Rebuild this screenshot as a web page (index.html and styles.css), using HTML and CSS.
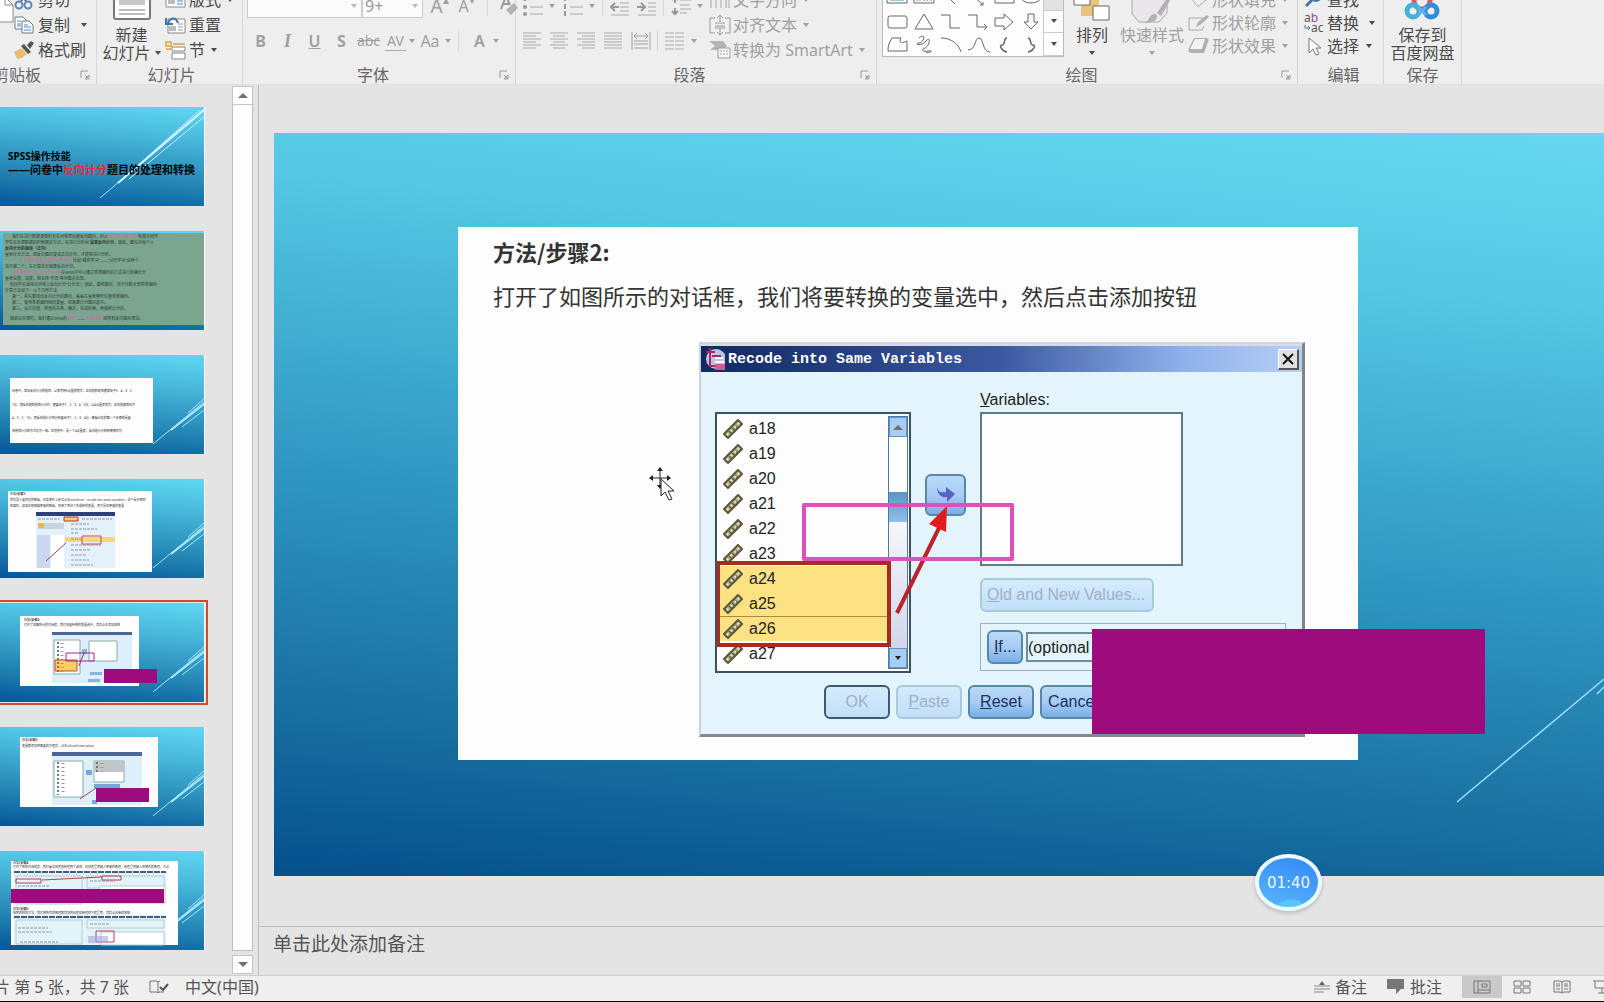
FILE: index.html
```
<!DOCTYPE html>
<html lang="zh-CN">
<head>
<meta charset="utf-8">
<title>SPSS操作技能</title>
<link rel="stylesheet" href="styles.css">
</head>
<body>
<svg class="defs" aria-hidden="true">
  <symbol id="launch" viewBox="0 0 10 10"><path d="M1 8V1h7M5 5l3 3M9 5v4H5z" fill="none" stroke="currentColor"/></symbol>
  <symbol id="streaks" viewBox="0 0 204 99"><g stroke="#a5e6fa" fill="none"><path d="M153 89L204 47"/><path d="M171 75L204 49" stroke-width="2"/><path d="M182 72L204 55M188 58L204 44"/></g></symbol>
  <symbol id="ruler" viewBox="0 0 20 20"><path d="M1 15L15 1l4 4L5 19z" fill="#b9b48c" stroke="#5c583d" stroke-width="2"/><path d="M6 12l3 3M9 9l3 3M12 6l3 3" stroke="#5c583d" stroke-width="1.5"/><path d="M4 15l1 1M8 11l1 1M12 7l1 1M15 4l1 1" stroke="#f2efd2" stroke-width="2"/></symbol>
</svg>

<header class="ribbon">
  <section class="group clip">
    <div class="main">
      <button class="big paste"><svg width="60" height="30"><path d="M34 3h17l8 8v17H34z" fill="#fff" stroke="#888"/><path d="M51 3v8h8" fill="none" stroke="#888"/></svg><span>粘贴</span><span>&nbsp;</span></button>
      <div class="col">
        <button class="cmd"><svg width="20" height="20"><path d="M7 11L15 1M12 11L5 1" stroke="#555" stroke-width="2"/><circle cx="5" cy="15" r="3.5" fill="none" stroke="#5b88bd" stroke-width="2"/><circle cx="14" cy="15" r="3.5" fill="none" stroke="#5b88bd" stroke-width="2"/></svg>剪切</button>
        <button class="cmd"><svg width="20" height="20"><path d="M1 2h8l3 3v9H1z" fill="#fff" stroke="#6d7b8a"/><path d="M3 6h4M3 9h4M3 11h4" stroke="#5b88bd"/><path d="M8 6h7l4 4v8H8z" fill="#fff" stroke="#6d7b8a"/><path d="M10 10h4M10 12h7M10 15h7" stroke="#5b88bd"/></svg>复制<i class="caret far"></i></button>
        <button class="cmd"><svg width="20" height="20"><path d="M0 12l8-4 5 6-5 4-5 1z" fill="#e8bd72"/><path d="M7 6l3-2 7 8-3 2zM13 5l4-4 3 2-4 6z" fill="#555"/></svg>格式刷</button>
      </div>
    </div>
    <footer class="label"><span>剪贴板</span><button class="launch" aria-label="剪贴板选项"><svg width="10" height="10"><use href="#launch"/></svg></button></footer>
  </section>

  <section class="group slides">
    <div class="main">
      <button class="big new"><svg width="40" height="42"><rect x="2" y="4" width="36" height="37" rx="2" fill="#fff" stroke="#777" stroke-width="2"/><path d="M7 10h26v17H7z" fill="#c9c9cd"/><path d="M7 32h26M7 36h26" stroke="#777"/></svg><span>新建</span><span>幻灯片<i class="caret"></i></span></button>
      <div class="col">
        <button class="cmd"><svg width="22" height="20"><path d="M1 1h19v16H1z" fill="#fff" stroke="#888"/><path d="M3 5h7v9H3z" fill="#bbb"/><path d="M12 8h6M12 11h6M12 14h6" stroke="#4e81b5"/></svg>版式<i class="caret"></i></button>
        <button class="cmd"><svg width="22" height="20"><path d="M3 4h17v14H3z" fill="#fff" stroke="#888"/><path d="M4 11h7v5H4z" fill="#bbb"/><path d="M13 9h5M13 12h5M13 15h5" stroke="#999"/><path d="M3 8c3-6 8-6 10 0M1 3v6h7" fill="none" stroke="#3e74ae" stroke-width="2"/></svg>重置</button>
        <button class="cmd"><svg width="22" height="20"><path d="M1 2h5v4H1z" fill="none" stroke="#e5b45f" stroke-width="2"/><path d="M8 4h12M1 9h5" stroke="#e5b45f" stroke-width="2"/><path d="M7 7h13v4H7zM7 13h13v6H7z" fill="#fff" stroke="#888"/></svg>节<i class="caret"></i></button>
      </div>
    </div>
    <footer class="label"><span>幻灯片</span></footer>
  </section>

  <section class="group font off">
    <div class="main stack">
      <div class="line">
        <label class="combo name"><input aria-label="字体名称" value=""><i class="caret"></i></label>
        <label class="combo size"><input aria-label="字号" value="9+"><i class="caret"></i></label>
        <button class="tool a1">A<sup>▴</sup></button><button class="tool a2">A<sup>▾</sup></button><i class="sep"></i>
        <button class="tool" aria-label="清除格式"><svg width="20" height="22"><path d="M2 14L7 1l4 9M4 9h6" fill="none" stroke="#999" stroke-width="2"/><path d="M7 15l8-7 4 5-7 7z" fill="#b4b0b4"/></svg></button>
      </div>
      <div class="line low">
        <button class="tool"><b>B</b></button><button class="tool serif"><b><em>I</em></b></button><button class="tool semi"><u>U</u></button><button class="tool"><b>S</b></button><button class="tool small"><s>abc</s></button><button class="tool av">AV</button><i class="caret"></i><button class="tool aa">Aa</button><i class="caret"></i><i class="sep"></i><button class="tool semi">A</button><i class="caret"></i>
      </div>
    </div>
    <footer class="label"><span>字体</span><button class="launch" aria-label="字体选项"><svg width="10" height="10"><use href="#launch"/></svg></button></footer>
  </section>

  <section class="group para off">
    <div class="main">
      <div class="stack">
        <div class="line">
          <button class="tool" aria-label="项目符号"><svg width="20" height="20"><path d="M7 3h13M7 11h13M7 18h13" stroke="#aaa"/><circle cx="2" cy="3" r="2" fill="#999"/><circle cx="2" cy="11" r="2" fill="#999"/><circle cx="2" cy="18" r="2" fill="#999"/></svg></button><i class="caret"></i>
          <button class="tool" aria-label="编号"><svg width="20" height="20"><path d="M7 3h13M7 11h13M7 18h13" stroke="#aaa"/><path d="M2 0v5M2 8v5M2 15v5" stroke="#999" stroke-width="2"/></svg></button><i class="caret"></i><i class="sep wide"></i>
          <button class="tool" aria-label="减少缩进"><svg width="22" height="20"><path d="M2 3h18M11 7h9M11 11h9M11 15h9M2 19h18" stroke="#aaa"/><path d="M10 11H2M6 7l-4 4 4 4" fill="none" stroke="#999" stroke-width="2"/></svg></button>
          <button class="tool" aria-label="增加缩进"><svg width="22" height="20"><path d="M2 3h18M12 7h8M12 11h8M12 15h8M2 19h18" stroke="#aaa"/><path d="M1 11h8M5 7l4 4-4 4" fill="none" stroke="#999" stroke-width="2"/></svg></button><i class="sep wide"></i>
          <button class="tool" aria-label="行距"><svg width="20" height="20"><path d="M9 4h11M9 9h10M9 13h11M9 17h7" stroke="#aaa"/><path d="M4 0v7M4 12v7M1 4l3-3 3 3M1 15l3 3 3-3" fill="none" stroke="#999" stroke-width="2"/></svg></button><i class="caret"></i>
        </div>
        <div class="line low">
          <button class="tool" aria-label="左对齐"><svg width="19" height="18"><path d="M0 1h18M0 4h13M0 7h18M0 10h13M0 13h18M0 16h13" stroke="#aaa"/></svg></button>
          <button class="tool" aria-label="居中"><svg width="19" height="18"><path d="M0 1h18M3 4h12M0 7h18M3 10h12M0 13h18M3 16h12" stroke="#aaa"/></svg></button>
          <button class="tool" aria-label="右对齐"><svg width="19" height="18"><path d="M0 1h18M5 4h13M0 7h18M5 10h13M0 13h18M5 16h13" stroke="#aaa"/></svg></button>
          <button class="tool" aria-label="两端对齐"><svg width="19" height="18"><path d="M0 1h18M0 4h18M0 7h18M0 10h18M0 13h18M0 16h18" stroke="#aaa"/></svg></button>
          <button class="tool" aria-label="分散对齐"><svg width="20" height="18"><path d="M1 0v18M19 0v18M3 9h14M3 12h14M3 16h14M3 4h14M6 1L3 4l3 3M14 1l3 3-3 3" fill="none" stroke="#a2a2a2"/></svg></button><i class="sep wide"></i>
          <button class="tool" aria-label="分栏"><svg width="19" height="18"><path d="M0 1h9M0 5h9M0 9h9M0 13h9M0 17h9M10 1h9M10 5h9M10 9h9M10 13h9M10 17h9" stroke="#aaa"/></svg></button><i class="caret"></i>
        </div>
      </div>
      <div class="col">
        <button class="cmd"><svg width="22" height="20"><path d="M2 1v17M7 1v17M12 5v13M17 1v17M20 5v13" stroke="#aaa"/></svg>文字方向<i class="caret"></i></button>
        <button class="cmd"><svg width="22" height="20"><path d="M6 3H1v15h5M16 3h5v15h-5M6 8h10M6 11h10M6 13h10M11 0v7M11 14v6M8 3l3-3 3 3M8 17l3 3 3-3" fill="none" stroke="#999"/></svg>对齐文本<i class="caret"></i></button>
        <button class="cmd"><svg width="22" height="20"><path d="M0 1h14l4 5-4 4H1l5-4z" fill="#b5b5b5"/><path d="M9 8h12v10H9z" fill="#f4f4f4" stroke="#999"/><path d="M11 11h8M11 14h8" stroke="#aaa" stroke-dasharray="2 1"/></svg>转换为 SmartArt<i class="caret"></i></button>
      </div>
    </div>
    <footer class="label"><span>段落</span><button class="launch" aria-label="段落选项"><svg width="10" height="10"><use href="#launch"/></svg></button></footer>
  </section>

  <section class="group draw">
    <div class="main tight">
      <div class="gallery">
        <svg width="160" height="68" fill="none" stroke="#666">
          <path d="M4 2h20v13H4zM31 2h20v13H31z"/><path d="M7 6h8M7 9h14M7 12h14" stroke="#3a9aa5"/><path d="M34 5v8M37 5v8M41 5v8M44 5v8M48 8v5" stroke="#7a6a88"/>
          <path d="M60 4l12 12M86 4l14 13M97 17h3v-3M112 4h19v11h-19z"/><ellipse cx="148" cy="9" rx="10" ry="6"/>
          <rect x="5" y="28" width="19" height="12" rx="2"/><path d="M41 26l9 15H32zM58 27h9v13h10M85 27h9v12h10M101 36l3 3-3 3M112 30h9v-4l9 8-9 8v-4h-9zM145 26h6v8h4l-7 7-7-7h4z"/>
          <path d="M5 63c0-6 1-8 4-13h9c-3 6 2 5 6 3v10zM36 50c7-6 6 4 0 5s2 4 7-2 4 5-1 7-2 4 4 3-1 3-3 1M58 50c11 0 18 7 20 14M85 62c9-1 6-12 11-12s3 14 11 14"/>
          <path d="M124 50c-4 0-1 7-5 7s1 7 5 7M145 50c4 0 1 7 5 7s-1 7-5 7" stroke-width="1.5"/>
        </svg>
        <div class="spin"><button aria-label="上一行"></button><button aria-label="下一行"><i class="caret"></i></button><button aria-label="其他"><i class="caret more"></i></button></div>
      </div>
      <button class="big arr"><svg width="38" height="34"><path d="M8 10h18v18H8z" fill="#ebc27a"/><path d="M1 1h16v16H1zM20 18h16v14H20z" fill="#fff" stroke="#666"/></svg><span>排列</span><span><i class="caret"></i></span></button>
      <button class="big quick off"><svg width="42" height="40"><path d="M1 2h35v27l-8 9H8l-7-8z" fill="#eae7ea" stroke="#aaa"/><path d="M12 39c7 0 5-10 13-9 4 6-5 10-13 9zM26 29l12-18 3 2-11 19z" fill="#b4b0b4"/></svg><span>快速样式</span><span><i class="caret"></i></span></button>
      <div class="col off">
        <button class="cmd"><svg width="22" height="20"><path d="M3 8l8-7 8 8-9 8z" fill="#eee" stroke="#aaa"/></svg>形状填充<i class="caret"></i></button>
        <button class="cmd"><svg width="22" height="20"><path d="M1 5h15M1 5v12h13l2-4" fill="none" stroke="#aaa"/><path d="M8 14l2-5 9-7 2 2-9 8z" fill="#b3aeb3"/></svg>形状轮廓<i class="caret"></i></button>
        <button class="cmd"><svg width="22" height="20"><path d="M6 2h12c3 0 3 2 2 4l-4 11H4c-4 0-4-3-3-5z" fill="#b3aeb3"/><path d="M7 3h10L14 13H2z" fill="#f3f1f3"/></svg>形状效果<i class="caret"></i></button>
      </div>
    </div>
    <footer class="label"><span>绘图</span><button class="launch off" aria-label="绘图选项"><svg width="10" height="10"><use href="#launch"/></svg></button></footer>
  </section>

  <section class="group edit">
    <div class="main tight"><div class="col">
      <button class="cmd"><svg width="20" height="20"><circle cx="12" cy="6" r="5" fill="none" stroke="#4377ad" stroke-width="2"/><path d="M8 10l-6 6" stroke="#4377ad" stroke-width="3"/></svg>查找</button>
      <button class="cmd"><svg width="20" height="20" class="swap"><text x="0" y="9">a<tspan fill="#8b4aa0">b</tspan></text><text x="7" y="19">ac</text><path d="M1 12v3h5M4 13l2 2-2 2" fill="none" stroke="#4377ad"/></svg>替换<i class="caret far"></i></button>
      <button class="cmd"><svg width="20" height="20"><path d="M5 2v15l4-4 3 6 3-1-3-6h5z" fill="#fff" stroke="#777"/></svg>选择<i class="caret"></i></button>
    </div></div>
    <footer class="label"><span>编辑</span></footer>
  </section>

  <section class="group save">
    <div class="main">
      <button class="big"><svg width="36" height="42" fill="none" stroke-width="5"><circle cx="18" cy="23" r="8" stroke="#e65368"/><circle cx="9" cy="33" r="6" stroke="#42b2dd"/><circle cx="27" cy="33" r="6" stroke="#2f8ed8"/><path d="M14 29l8 8M22 29l-8 8" stroke="#58b5e6" stroke-width="3"/></svg><span>保存到</span><span>百度网盘</span></button>
    </div>
    <footer class="label"><span>保存</span></footer>
  </section>
</header>

<div class="work">
  <nav class="thumbs" aria-label="幻灯片缩略图">
    <button class="thumb"><svg viewBox="0 0 204 99"><path d="M100 91L204 2" stroke="#a5e6fa"/><path d="M118 76L204 3" stroke="#d5f5fd" stroke-width="2"/><path d="M136 60L200 3M129 72L204 10" stroke="#c3effb"/><text x="8" y="53" class="t10 bold">SPSS操作技能</text><text x="8" y="67" class="t11 bold">——问卷中<tspan fill="#e8283c">反向计分</tspan>题目的处理和转换</text></svg></button>
    <button class="thumb"><svg viewBox="0 0 204 99"><path d="M3 2h201v92H3z" fill="#7ba58e"/><g class="t4">
      <text x="12" y="7">我们在进行数据调查时会在问卷里设置反向题目，防止 <tspan class="pk">被试不认真作答</tspan> 有很多同学</text>
      <text x="5" y="13">学生在处理数据的时候都会忘记，在进行分析前 <tspan class="bold">需要反向计分</tspan>，因此，要先对每个人</text>
      <text x="5" y="19" class="bold">反向计分的题目（正向）</text><text x="5" y="25">量表计分方法，把反向题目变成正向计分，才能够进行分析。</text>
      <text x="20" y="31"><tspan class="pk">正向题目和反向题目混合使用</tspan> 比如“喜欢学习”——“讨厌学习”这两个</text>
      <text x="5" y="37">其中第二个，在计算总分需要反向计分。</text>
      <text x="12" y="43"><tspan class="pk">如果没有进行反向计分处理</tspan> 在SPSS中可以通过重新编码的方式进行转换计分</text>
      <text x="5" y="49">量表信度，效度，相关性“不高”等问题会出现。</text><text x="10" y="55">有同学会直接在问卷上反向计分“计分法”，因此，要把题目，其中分数全部重新编码</text>
      <text x="5" y="61">计算方法如下：以下几种方法</text><text x="12" y="67">第一，首先要找出反向计分的题目，看看在量表哪些位置重新编码。</text><text x="12" y="73">第二，使用重新编码相同变量，把需要计分题目选中。</text><text x="12" y="79">第三，设定旧值、新值的关系，确定，完成转换，再做统计分析。</text>
      <text x="10" y="89">因此在处理时，我们通过SPSS的 <tspan class="pk">转换</tspan> —— <tspan class="pk">重新编码</tspan> 把所有反向题处理完。</text></g></svg></button>
    <button class="thumb"><svg viewBox="0 0 204 99"><use href="#streaks"/><path d="M10 23h143v65H10z" fill="#fdfdfd"/><g class="t3 mid"><text x="12" y="37">问卷中，常见反向计分的题目，以李克特5点量表而言，正向题的题项通常给予5、4、3、2、</text><text x="12" y="51">1分，而反向题的题项计分时，便要给予1、2、3、4、5分；以4点量表而言，正向题通常给予</text><text x="12" y="64">4、3、2、1分，而反向题计分则分别要给予1、2、3、4分，数据分析的第一个步骤就是要</text><text x="12" y="77">将题项计分的方式化为一致。在范例中，是一个4点量表，反向题计分的转换情形为：</text></g></svg></button>
    <button class="thumb"><svg viewBox="0 0 204 99"><use href="#streaks"/><path d="M8 12h144v81H8z" fill="#fdfdfd"/><g class="t3"><text x="10" y="16" class="bold">方法/步骤1:</text><text x="10" y="22">首先导入要处理的数据，在菜单栏上依次点击transform - recode into same variables，这个是对相同</text><text x="10" y="28">的编码，如果你想保留原来的数据，则用下面这个生成新的变量，而不是在原来的变量</text></g>
      <path d="M36 33h79v56H36z" fill="#e5f1fa"/><path d="M36 33h79v4H36z" fill="#2c3f78"/><path d="M38 44h26v6H38z" fill="#c7d3de"/><path d="M38 44h6v5h-6z" fill="#e5b74f"/><path d="M64 38h14v4H64z" fill="#f2cf6a" stroke="#b6323c"/><path d="M65 58h50v5H65z" fill="#f5d873"/><path d="M37 56h13v33H37z" fill="#cbd9f0"/><path d="M51 56h13v33H51z" fill="#fff"/><path d="M38 40h22M82 40h30M71 45h18M71 50h26M71 54h8M71 60h10M71 66h30M71 71h20M71 76h16M71 81h18M71 86h22" stroke="#8b94a5" stroke-dasharray="3 1"/><path d="M82 57h19v8H82z" fill="none" stroke="#c24f52"/><path d="M46 82L66 64" stroke="#a83b58"/></svg></button>
    <button class="thumb current"><svg viewBox="0 0 204 99"><use href="#streaks"/><path d="M20 13h119v70H20z" fill="#fdfdfd"/><g class="t3"><text x="24" y="18" class="bold">方法/步骤2:</text><text x="24" y="23">打开了如图所示的对话框，我们将要转换的变量选中，然后点击添加按钮</text></g>
      <path d="M52 29h80v51H52z" fill="#ddeffa"/><path d="M52 29h80v3H52z" fill="#4c6698"/><path d="M54 37h26v34H54zM89 38h28v20H89z" fill="#fff" stroke="#8aa"/><path d="M55 57h22v11H55z" fill="#f7cf63" stroke="#c74632"/><path d="M58 39v32" stroke="#777" stroke-width="2" stroke-dasharray="2 2"/><path d="M62 40v30" stroke="#999" stroke-width="3" stroke-dasharray="1 3"/><path d="M82 46h5v5h-5zM90 69h12v3H90zM88 76h12v3H88z" fill="#8cb1e3"/><path d="M66 50h28v8H66zM79 63l5-13" fill="none" stroke="#a2238b"/><path d="M104 66h53v14h-53z" fill="#9e0b7d"/></svg></button>
    <button class="thumb"><svg viewBox="0 0 204 99"><use href="#streaks"/><path d="M20 10h138v70H20z" fill="#fdfdfd"/><g class="t3"><text x="22" y="14" class="bold">方法/步骤3:</text><text x="22" y="20">变量都添加到需要的方框后，点击old and new values</text></g>
      <path d="M52 25h90v53H52z" fill="#ddeffa"/><path d="M52 25h90v4H52z" fill="#4c6698"/><path d="M54 34h29v36H54zM94 34h30v21H94z" fill="#fff" stroke="#8aa"/><path d="M94 34h30v11H94z" fill="#c2c6c8"/><path d="M58 35v33M97 35v10" stroke="#777" stroke-width="2" stroke-dasharray="2 2"/><path d="M63 36v32M102 36v9" stroke="#999" stroke-width="3" stroke-dasharray="1 3"/><path d="M86 43h6v5h-6zM94 57h26v4H94zM92 73h5v4h-5z" fill="#7aa5da"/><path d="M80 72l16-11" stroke="#a83b58"/><path d="M96 61h53v14H96z" fill="#9e0b7d"/></svg></button>
    <button class="thumb"><svg viewBox="0 0 204 99"><use href="#streaks"/><path d="M11 10h167v84H11z" fill="#fdfdfd"/><g class="t3"><text x="13" y="13" class="bold">方法/步骤4:</text><text x="13" y="17">打开了新的对话框后，我们看见旧值和新值两个选项，在旧值里面输入原来的数值，新值里面输入转换后的数值，再点</text><text x="13" y="59" class="bold">方法/步骤5:</text><text x="13" y="63">按照同样的方法，我们把所有的数值都添加到旧值和新值的方框里面，然后点击继续按钮</text></g>
      <path d="M14 20h152v33H14zM14 64h152v30H14z" fill="#e2f3fa"/><path d="M14 21h152M14 66h152" stroke="#455a85" stroke-width="2" stroke-dasharray="6 1"/><path d="M16 25h66v28H16zM87 25h77v12H87zM16 69h66v24H16zM87 69h77v8H87z" fill="none" stroke="#b6ccd2"/><path d="M101 81h63v13h-63zM100 35h65v17h-65z" fill="#fff" stroke="#b6ccd2"/><path d="M18 35h32M90 30h25M18 77h30M18 81h34M20 91h38M90 73h20" stroke="#8995a0" stroke-dasharray="3 1"/><path d="M16 28h25v4H16zM102 25h19v4h-19zM96 80h18v11H96zM42 29l60-3" fill="none" stroke="#b84050"/><path d="M88 85h20v7H88z" fill="#aaa6df" opacity=".6"/><path d="M11 38h153v14H11z" fill="#9e0b7d"/></svg></button>
  </nav>
  <div class="vscroll"><button aria-label="向上滚动"><i class="up"></i></button><div class="track"></div><button aria-label="向下滚动"><i class="caret"></i></button></div>

  <main class="editor">
    <div class="stage">
      <article class="slide">
        <svg class="beams" width="147" height="125" aria-hidden="true"><path d="M0 124L147 1M140 16l7-7" stroke="#9adcf5" stroke-width="1.5"/></svg>
        <div class="paper"><h1>方法/步骤2:</h1><p>打开了如图所示的对话框，我们将要转换的变量选中，然后点击添加按钮</p></div>
        <section class="dialog">
          <header class="title"><svg width="22" height="24"><circle cx="13" cy="12" r="10" fill="#b4c8e6"/><path d="M3 5h9M7 1v18h7M9 9h9" stroke="#b52459" stroke-width="2" fill="none"/><path d="M12 11h8M12 15h9" stroke="#fff" stroke-width="2"/><path d="M12 17h10v6H12z" fill="#d55a91"/></svg><span>Recode into Same Variables</span><button aria-label="关闭"><svg width="12" height="12"><path d="M1 1l10 10M11 1L1 11" stroke="#111" stroke-width="2"/></svg></button></header>
          <div class="fields">
            <div class="list">
              <ul><li><svg><use href="#ruler"/></svg>a18</li><li><svg><use href="#ruler"/></svg>a19</li><li><svg><use href="#ruler"/></svg>a20</li><li><svg><use href="#ruler"/></svg>a21</li><li><svg><use href="#ruler"/></svg>a22</li><li><svg><use href="#ruler"/></svg>a23</li><li class="sel"><svg><use href="#ruler"/></svg>a24</li><li class="sel"><svg><use href="#ruler"/></svg>a25</li><li class="sel last"><svg><use href="#ruler"/></svg>a26</li><li><svg><use href="#ruler"/></svg>a27</li></ul>
              <div class="bar"><button aria-label="上"><i class="up"></i></button><span></span><button aria-label="下"><i class="caret"></i></button></div>
              <div class="redbox"></div>
            </div>
            <button class="xp move" aria-label="添加"><svg width="20" height="20"><path d="M1 2c1 5 4 6 9 5V2l9 7-8 8v-5C5 13 1 9 1 2z" fill="#5661c4"/></svg></button>
            <div class="right">
              <label for="vars"><u>V</u>ariables:</label>
              <textarea id="vars" readonly></textarea>
              <button class="xp dim"><span><u>O</u>ld and New Values...</span></button>
              <div class="if"><button class="xp"><span><u>I</u>f...</span></button><output>(optional case selection condition)</output></div>
            </div>
          </div>
          <footer class="acts"><button class="xp ok dim">OK</button><button class="xp dim"><span><u>P</u>aste</span></button><button class="xp"><span><u>R</u>eset</span></button><button class="xp">Cancel</button></footer>
        </section>
        <svg class="redarrow" width="56" height="112" aria-hidden="true"><path d="M2 109L44 24" stroke="#b9242b" stroke-width="4"/><path d="M52 2L34 20l17 8z" fill="#e01c1c"/></svg>
        <div class="pinkbox"></div>
        <div class="cover"></div>
        <svg class="cursor" width="28" height="34" aria-hidden="true"><path d="M11 1v20M1 11h20" stroke="#222"/><path d="M11 0l3 4H8zM11 22l3-4H8zM0 11l4-3v6zM22 11l-4-3v6z" fill="#222"/><path d="M12 12v17l4-4 4 8 3-1-4-8h6z" fill="#fff" stroke="#222"/></svg>
      </article>
    </div>
    <div class="notes">单击此处添加备注</div>
  </main>
  <div class="timer">01:40</div>
</div>

<footer class="status">
  <span class="count">幻灯片 第 5 张，共 7 张</span>
  <button class="proof" aria-label="拼写检查"><svg width="20" height="14" fill="none" stroke="#777"><path d="M9 2v11M1 1h7l1 1 2-1M1 1v11h7l1 1 1-1h5"/><path d="M11 7l3 3 5-6" stroke="#555" stroke-width="2"/></svg></button>
  <button>中文(中国)</button>
  <span class="fill"></span>
  <button class="ic"><svg width="16" height="14"><path d="M5 5l3-4 3 4z" fill="#666"/><path d="M0 6h16M0 9h16M0 12h10" stroke="#888"/></svg>备注</button>
  <button class="ic"><svg width="18" height="16"><path d="M0 0h17v10h-3l-5 5v-5H0z" fill="#777"/></svg>批注</button>
  <div class="views">
    <button class="on" aria-label="普通视图"><svg width="18" height="14" fill="none" stroke="#777"><path d="M1 1h16v12H1zM5 1v12M5 10h12M9 4h5v3H9z"/></svg></button>
    <button aria-label="幻灯片浏览"><svg width="18" height="14" fill="none" stroke="#777"><path d="M1 1h7v5H1zM10 1h7v5h-7zM1 8h7v5H1zM10 8h7v5h-7z"/></svg></button>
    <button aria-label="阅读视图"><svg width="18" height="14" fill="none" stroke="#777"><path d="M9 2v11M1 1h6l2 1 2-1h6v11h-6l-2 1-2-1H1zM3 4h4M3 6h4M3 9h4M11 4h4M11 6h4M11 9h4"/></svg></button>
    <button aria-label="幻灯片放映"><svg width="18" height="14" fill="none" stroke="#777"><path d="M0 1h18M2 1v7h14V1M9 8v5M5 13h8"/></svg></button>
  </div>
</footer>
</body>
</html>
```
FILE: styles.css
```
* { box-sizing: border-box; }
body {
  margin: 0; height: 100vh; overflow: hidden;
  display: grid; grid-template-rows: 85px 1fr 27px;
  background: #e4e4e4; color: #4a4a4a;
  font: 16px/18px "Noto Sans", "Noto Sans CJK SC", sans-serif;
}
button { font: inherit; color: inherit; background: none; border: 0; padding: 0; margin: 0; white-space: nowrap; }
svg { display: block; flex: none; }
.defs { position: absolute; width: 0; height: 0; }
.off { color: #a0a0a0; }
.caret { flex: none; display: inline-block; border: 3px solid transparent; border-top: 4px solid currentColor; border-bottom: 0; }
.up { display: block; border: 5px solid transparent; border-bottom: 5px solid #707070; border-top: 0; }

/* ribbon */
.ribbon { display: flex; overflow: hidden; background: #eee; border-bottom: 1px solid #e0e0e0; }
.group { flex: none; display: flex; flex-direction: column; height: 84px; border-right: 1px solid #d6d6d6; }
.main { height: 62px; display: flex; align-items: flex-end; }
.main.tight { padding-bottom: 5px; }
.tight { --row: 23px; }
.col { display: flex; flex-direction: column; }
.cmd { height: var(--row, 25px); display: flex; align-items: center; gap: 2px; }
.cmd .caret { margin-left: 4px; }
.cmd .far { margin-left: 7px; }
.big { display: flex; flex-direction: column; align-items: center; }
.big svg { margin-bottom: 6px; }
.big span { display: flex; align-items: center; height: 18px; }
.big .caret { margin-left: 4px; }
.label { height: 22px; display: flex; align-items: center; color: #666; padding-top: 3px; }
.label span { flex: 1; text-align: center; }
.launch { width: 16px; display: grid; place-items: center start; color: #999; }
.clip { width: 143px; margin-left: -46px; }
.clip .cmd { gap: 4px; }
.paste { width: 60px; }
.paste svg { margin-bottom: 2px; }
.slides { width: 146px; padding-left: 4px; }
.new { width: 61px; margin-right: 3px; }
.font { width: 273px; padding-left: 4px; }
.stack { display: flex; flex-direction: column; align-items: flex-start; justify-content: flex-end; gap: 11px; padding-bottom: 9px; }
.line { display: flex; align-items: center; height: 25px; }
.line.low { height: 24px; }
.combo { display: flex; align-items: center; height: 25px; background: #fbfbfb; border: 1px solid #ccc; }
.combo input { min-width: 0; flex: 1; height: 21px; border: 0; padding: 0 2px; background: none; font: inherit; color: #999; }
.combo .caret { border-top-color: #bbb; margin-right: 4px; }
.name { width: 115px; }
.size { width: 61px; }
.tool { width: 27px; height: 24px; display: grid; place-items: center; grid-auto-flow: column; justify-content: center; }
.tool sup { font-size: 12px; line-height: 12px; align-self: start; }
.semi { font-weight: 600; }
.a1 { font-size: 19px; margin-left: 3px; }
.sep { width: 1px; height: 20px; margin: 0 7px; background: #d6d6d6; }
.serif { font-family: "Liberation Serif", serif; font-size: 18px; }
.small { font-size: 14px; }
.av { font-size: 14px; border-bottom: 1px solid #aaa; height: 20px; width: 21px; margin: 0 3px; }
.aa { width: 30px; }
.para { width: 361px; padding-left: 3px; }
.para .stack { width: 190px; }
.para .line .caret { margin: 0 4px 0 3px; }
.para .line .wide { margin: 0 3px; }
.draw { width: 421px; padding-left: 5px; }
.gallery { display: flex; border: 1px solid #bbb; background: #fdfdfd; height: 70px; }
.spin { width: 20px; display: grid; grid-template-rows: 1fr 1fr 1fr; border-left: 1px solid #ccc; }
.spin button { border-bottom: 1px solid #ccc; display: grid; place-items: center; }
.spin button:first-child { background: #e2e2e2; }
.more { box-shadow: 0 -5px 0 -4px #555; }
.arr { width: 38px; margin-left: 9px; }
.arr .caret, .quick .caret { margin-left: 0; }
.arr svg { margin-bottom: 4px; }
.quick svg { margin-bottom: 2px; }
.quick { width: 64px; margin: 0 4px 0 9px; }
.arr, .quick { margin-bottom: -5px; }
.edit { width: 86px; padding-left: 6px; }
.edit .cmd { gap: 3px; }
.swap { font: 12px "Noto Sans", sans-serif; fill: #555; }
.save { width: 78px; }
.save .main { justify-content: center; }

/* slide list */
.work { position: relative; display: flex; min-height: 0; }
.thumbs { width: 232px; flex: none; padding-top: 22px; display: flex; flex-direction: column; gap: 25px; overflow: hidden; }
.thumb { width: 205px; height: 99px; flex: none; border-right: 1px solid #fff; background: linear-gradient(185deg, #60d8f2, #47b7da 30%, #2283b2 70%, #04569a); text-align: left; }
.thumb svg { width: 204px; height: 99px; }
.current { outline: 2px solid #c9502f; outline-offset: 1px; }
.t3 { font-size: 3px; fill: #333; }
.t4 { font-size: 4px; fill: #2c3a33; }
.mid { fill: #222; }
.t10 { font-size: 10px; }
.t11 { font-size: 11px; }
.bold { font-weight: 700; }
.pk { fill: #d45fb4; }
.vscroll { flex: none; width: 27px; display: flex; flex-direction: column; border-right: 1px solid #bdbdbd; padding: 1px 5px 1px 0; }
.vscroll button { height: 19px; flex: none; background: #fdfdfd; border: 1px solid #c4c4c4; display: grid; place-items: center; }
.vscroll .caret { border-width: 5px; border-top-color: #707070; border-bottom: 0; }
.track { flex: 1; background: #fdfdfd; border: 1px solid #bdbdbd; border-top: 0; margin-bottom: 4px; }

/* editor */
.editor { flex: 1; min-width: 0; display: flex; flex-direction: column; }
.stage { flex: 1; display: flex; padding: 48px 0 50px 15px; }
.slide { position: relative; flex: 1; overflow: hidden; background: linear-gradient(186deg, #66d8f0, #54c8e4 20%, #2f96c2 54%, #176d9e 82%, #04508d); }
.beams { position: absolute; right: 0; top: 545px; }
.paper { position: absolute; left: 184px; top: 94px; width: 900px; height: 533px; background: #fdfdfd; padding: 11px 35px; color: #333; font: 22px/26px "Noto Sans CJK SC", sans-serif; white-space: nowrap; }
.paper h1 { margin: 0 0 18px; font-size: 22px; font-weight: 700; }
.paper p { margin: 0; }
.notes { height: 49px; flex: none; border-top: 1px solid #bdbdbd; padding: 8px 14px; font-size: 19px; color: #555; }
.timer { position: absolute; right: 282px; bottom: 64px; width: 67px; height: 57px; border: 4px solid #e9fbff; border-radius: 50%; display: grid; place-items: center; color: #e9f8ff; font: 15px/18px "DejaVu Sans", sans-serif; background: radial-gradient(circle at 55% 122%, #58c6fb 26%, transparent 28%), linear-gradient(200deg, #3487f8, #58b7fa); box-shadow: 0 2px 4px #0003; }

/* statistics dialog */
.dialog { position: absolute; left: 425px; top: 209px; width: 606px; height: 395px; background: #e3f4fc; border: 2px solid #ccd3dc; border-right: 3px solid #7e858c; border-bottom: 3px solid #85898f; color: #222; font: 16px/20px "Liberation Sans", sans-serif; }
.title { height: 28px; display: flex; align-items: center; gap: 3px; padding: 0 3px 0 2px; border-top: 2px solid #d9dce2; background: linear-gradient(90deg, #102962, #3c59a0 50%, #8fb0ec 80%, #b6cff4); color: #fff; font: bold 15px/20px "Liberation Mono", monospace; }
.title span { flex: 1; padding-top: 2px; }
.title button { width: 21px; height: 21px; background: #e0e0e0; border: 1px solid #fff; border-right: 2px solid #555; border-bottom: 2px solid #555; display: grid; place-items: center; }
.fields { display: grid; grid-template-columns: 196px 41px 306px; column-gap: 14px; padding: 18px 0 0 14px; }
.list { position: relative; display: flex; height: 261px; margin-top: 22px; background: #fdfdfd; border: 2px solid #3d5260; padding: 2px 1px 2px 0; overflow: hidden; }
.list ul { flex: 1; margin: 0; padding: 0; list-style: none; }
.list li { height: 25px; display: flex; align-items: center; gap: 6px; padding-left: 6px; }
.list li svg { width: 20px; height: 20px; }
.list .sel { background: #fde284; }
.list .last { border-top: 1px solid #a98b3a; }
.redbox { position: absolute; left: -1px; top: 147px; width: 175px; height: 86px; border: 4px solid #a92a1e; }
.bar { width: 20px; display: flex; flex-direction: column; border: 1px solid #4a7aa8; background: linear-gradient(#fdfdfd 0 30%, #5e93c8 30%, #8fc0e8 42%, #f5f6fb 42%, #ccd2e6); }
.bar span { flex: 1; }
.bar button { height: 20px; background: #a7cdf1; border: 1px solid #6893bd; display: grid; place-items: center; }
.xp { border: 2px solid #5788a9; border-radius: 6px; background: linear-gradient(#b9d9f6, #a7cdf6 50%, #79aee4); height: 34px; display: grid; place-items: center; color: #1c2d58; }
.dim { border-color: #a9c9dd; background: linear-gradient(#d5ebfb, #c0dff8); color: #9fb0c8; }
.move { height: 42px; margin-top: 84px; }
.right { display: flex; flex-direction: column; align-items: flex-start; }
.right label { height: 22px; }
.right textarea { width: 203px; height: 154px; border: 2px solid #5e7d87; background: #fdfdfd; resize: none; margin: 0 0 12px; }
.right .dim { width: 174px; padding: 0 5px; justify-content: start; }
.if { width: 306px; height: 48px; margin-top: 11px; border: 1px solid #9bb3b8; padding: 6px; display: flex; gap: 3px; align-items: center; }
.if .xp { width: 36px; flex: none; }
.if output { flex: 1; height: 30px; border: 2px solid #6b9097; line-height: 27px; overflow: hidden; white-space: nowrap; }
.acts { display: flex; gap: 6px; padding: 12px 0 0 123px; }
.acts .xp { width: 66px; }
.acts .ok { border-color: #3d5a70; }
.redarrow { position: absolute; left: 621px; top: 371px; }
.pinkbox { position: absolute; left: 528px; top: 370px; width: 212px; height: 58px; border: 4px solid #df50bd; border-radius: 2px; }
.cover { position: absolute; left: 818px; top: 496px; width: 393px; height: 105px; background: #9e0b7d; }
.cursor { position: absolute; left: 375px; top: 334px; }

/* status bar */
.status { display: flex; align-items: center; background: #efefef; border-top: 1px solid #cfcfcf; border-bottom: 1px solid #000; color: #555; padding-bottom: 3px; }
.count { margin-left: -38px; white-space: nowrap; }
.proof { margin: 0 16px 0 20px; }
.fill { flex: 1; }
.ic { display: flex; align-items: center; gap: 5px; margin-right: 20px; }
.views { display: flex; align-self: stretch; margin-right: -18px; }
.views button { width: 40px; display: grid; place-items: center; }
.views .on { background: #c9c9c9; }
```
